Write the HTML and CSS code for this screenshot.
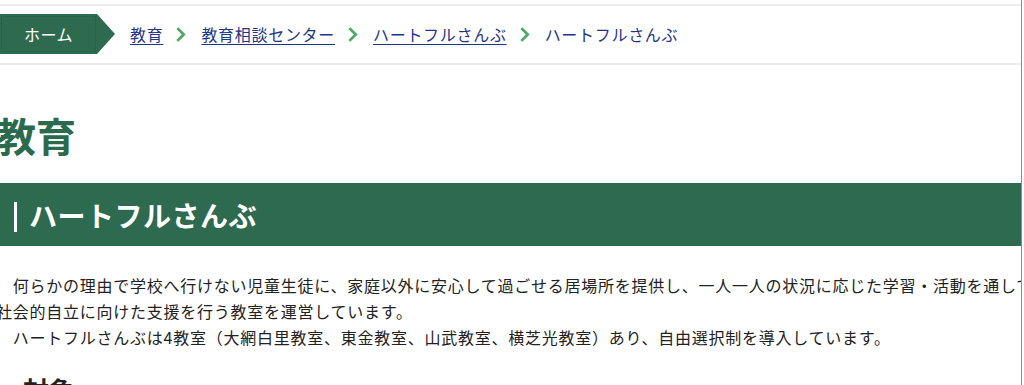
FILE: index.html
```html
<!DOCTYPE html>
<html lang="ja">
<head>
  <meta charset="UTF-8">
  <title>ハートフルさんぶ｜教育</title>
  <link rel="stylesheet" href="styles.css">
</head>
<body>
  <div class="page">

    <!-- パンくずリスト -->
    <nav class="breadcrumb">
      <a class="home" href="#"><span>ホーム</span></a>
      <a href="#">教育</a>
      <svg class="sep" viewBox="0 0 10 16"><polyline points="2,2 8,8 2,14"/></svg>
      <a href="#">教育相談センター</a>
      <svg class="sep" viewBox="0 0 10 16"><polyline points="2,2 8,8 2,14"/></svg>
      <a href="#">ハートフルさんぶ</a>
      <svg class="sep" viewBox="0 0 10 16"><polyline points="2,2 8,8 2,14"/></svg>
      <span class="current">ハートフルさんぶ</span>
    </nav>

    <main class="content">
      <h1>教育</h1>
      <h2 class="band"><span>ハートフルさんぶ</span></h2>
      <p>　何らかの理由で学校へ行けない児童生徒に、家庭以外に安心して過ごせる居場所を提供し、一人一人の状況に応じた学習・活動を通して社会的自立に向けた支援を行う教室を運営しています。<br>　ハートフルさんぶは4教室（大網白里教室、東金教室、山武教室、横芝光教室）あり、自由選択制を導入しています。</p>
      <h3>対象</h3>
    </main>

  </div>
</body>
</html>
```

FILE: styles.css
```css
html, body {
  margin: 0;
  height: 100%;
  overflow: hidden;
  background-color: #fff;
}

body {
  font-family: "Noto Sans CJK JP", "Noto Sans", sans-serif;
  color: #222;
}

.page {
  width: 1022px;
  min-height: 100%;
  border-right: 1px solid #8c8c8c;
  padding-top: 4px;
  box-sizing: border-box;
  overflow: hidden;
}

/* breadcrumb */
.breadcrumb {
  display: flex;
  align-items: center;
  border-top: 2px solid #ececec;
  border-bottom: 2px solid #ececec;
  padding: 8px 0 9px;
  font-size: 16px;
  letter-spacing: 0.7px;
}

.breadcrumb a {
  color: #1f3587;
  text-decoration: underline;
  text-underline-offset: 3px;
}

.breadcrumb .home {
  display: flex;
  align-items: center;
  justify-content: center;
  width: 115px;
  height: 40px;
  padding-right: 18px;
  box-sizing: border-box;
  background-color: #2d6a4f;
  clip-path: polygon(0 0, 97px 0, 115px 50%, 97px 100%, 0 100%);
  color: #fff;
  text-decoration: none;
  margin-right: 15px;
  letter-spacing: 0.5px;
}

.breadcrumb .home span {
  outline: 1px dotted rgba(40, 55, 150, 0.55);
  padding: 5px 22px;
}

.breadcrumb .sep {
  width: 11px;
  height: 17px;
  margin: 0 15px 0 12px;
  fill: none;
  stroke: #4fa864;
  stroke-width: 2.6;
}

.breadcrumb .current {
  color: #1f3587;
}

/* content */
.content {
  margin-left: -4px;
}

.content h1 {
  margin: 46px 0 24px;
  font-size: 40px;
  line-height: 48px;
  color: #2b6a4c;
}

.band {
  margin: 0;
  height: 63px;
  display: flex;
  align-items: center;
  background-color: #2d6a4f;
  color: #fff;
  font-size: 28px;
  padding-left: 18px;
  letter-spacing: 0.5px;
}

.band span::before {
  content: "";
  display: inline-block;
  width: 3px;
  height: 30px;
  background-color: #fff;
  vertical-align: -5px;
  margin-right: 12px;
}

.content p {
  margin: 26px -24px 0 0;
  font-size: 16px;
  line-height: 26px;
  letter-spacing: 0.75px;
  color: #222;
}

.content h3 {
  margin: 22px 0 0;
  padding-left: 27px;
  font-size: 26px;
  line-height: 36px;
}
```
